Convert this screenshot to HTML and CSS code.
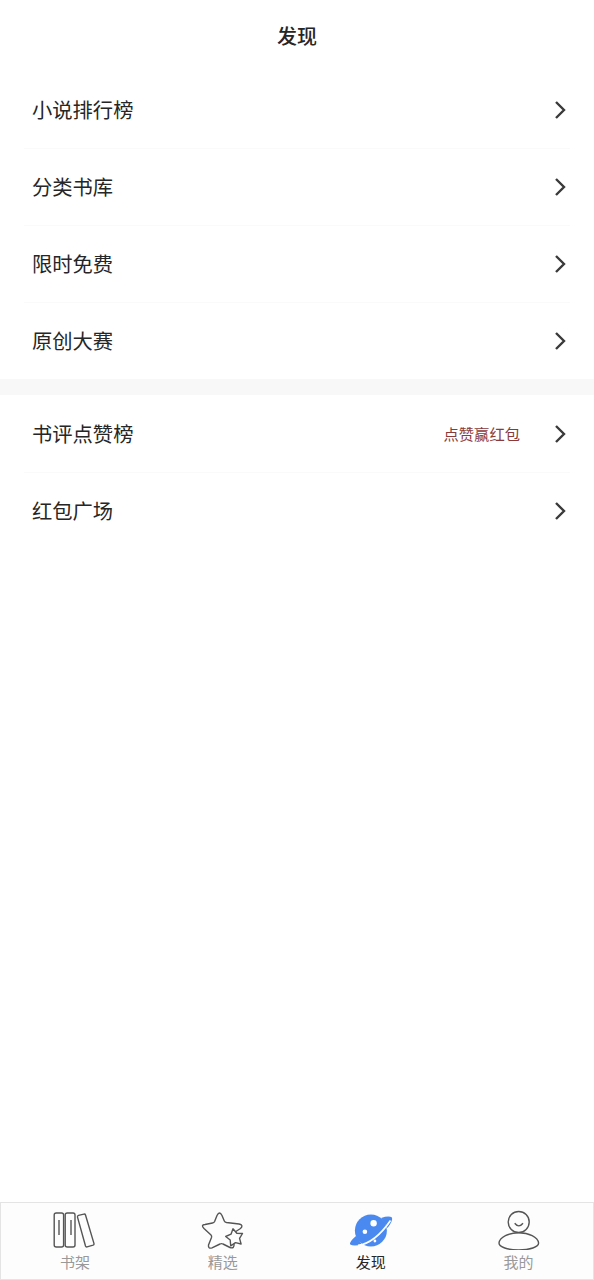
FILE: index.html
```html
<!DOCTYPE html>
<html lang="zh-CN">
<head>
  <meta charset="UTF-8">
  <meta name="viewport" content="width=device-width, initial-scale=1.0">
  <title>发现</title>
  <link rel="stylesheet" href="styles.css">
</head>
<body>
  <div class="page">
    <h1 class="title">发现</h1>

    <div class="group">
      <div class="row"><span class="row-name">小说排行榜</span><svg class="arrow" viewBox="0 0 12 20"><path d="M2 2l8 8-8 8"/></svg></div>
      <div class="row"><span class="row-name">分类书库</span><svg class="arrow" viewBox="0 0 12 20"><path d="M2 2l8 8-8 8"/></svg></div>
      <div class="row"><span class="row-name">限时免费</span><svg class="arrow" viewBox="0 0 12 20"><path d="M2 2l8 8-8 8"/></svg></div>
      <div class="row"><span class="row-name">原创大赛</span><svg class="arrow" viewBox="0 0 12 20"><path d="M2 2l8 8-8 8"/></svg></div>
    </div>

    <div class="divider"></div>

    <div class="group group-second">
      <div class="row"><span class="row-name">书评点赞榜</span><span class="row-tip">点赞赢红包</span><svg class="arrow" viewBox="0 0 12 20"><path d="M2 2l8 8-8 8"/></svg></div>
      <div class="row"><span class="row-name">红包广场</span><svg class="arrow" viewBox="0 0 12 20"><path d="M2 2l8 8-8 8"/></svg></div>
    </div>
  </div>

  <div class="tabbar">
    <div class="tab">
      <svg class="tab-icon" viewBox="0 0 48 40">
        <rect x="3.200" y="3" width="9.400" height="34" rx="2"/>
        <rect x="14.200" y="3" width="9.800" height="34" rx="2"/>
        <path d="M27.500 5.400l5.400-1.300q1.200-.3 1.600 .9l8.500 28.600q.3 1.200-.9 1.600l-6 1.700q-1.200 .3-1.600-.9l-8-28.900q-.3-1.300 1-1.700z"/>
        <path d="M8 10v15M20 10v15"/>
      </svg>
      <span>书架</span>
    </div>
    <div class="tab">
      <svg class="tab-icon" viewBox="0 0 48 40">
        <path d="M18 5.500Q20.500 .5 23 5.500L25.300 11Q25.800 12.200 27.500 12.500L40 14Q45 15 41.500 18.500L34.500 23Q33 25 33.500 27L35 34Q35.500 39 31 37.500L24 34Q22.500 33.200 21 34L13 37.800Q9 39 9.500 35L12.500 27.500Q13 26 12 25L5 18.500Q1.500 15 6 14.500L13.500 13Q15 12.800 15.600 11.500Z"/>
        <path class="small-star" d="M34 18.800L37.800 23.200 43.500 23.500 40.550 28.400 42.100 34 36.500 32.600 31.700 35.800 31.200 30 26.700 26.500 32 24.200Z"/>
      </svg>
      <span>精选</span>
    </div>
    <div class="tab tab-on">
      <svg class="tab-icon" viewBox="0 0 48 40">
        <circle class="planet" cx="23.900" cy="20.500" r="16"/>
        <path class="planet" d="M34 8Q42 5.500 45 7.500 46 11 40.500 18ZM9 26Q1.500 32.500 3.200 34.500 6.500 36.500 15 34.500Z"/>
        <path class="ring-gap" d="M11 35.500Q28 33 43.500 10.500"/>
        <circle class="dot" cx="26.600" cy="13.300" r="3.200"/>
        <circle class="dot" cx="17.900" cy="21.700" r="2.300"/>
        <circle class="dot" cx="27.900" cy="31" r="1.400"/>
      </svg>
      <span>发现</span>
    </div>
    <div class="tab">
      <svg class="tab-icon" viewBox="0 0 48 40">
        <circle cx="23.700" cy="12" r="10.500"/>
        <path d="M19.700 13.300Q23.800 18.500 28 13.300"/>
        <path d="M4 33C4.800 27 13.800 22.800 23.800 22.800C33.800 22.800 42.800 27 43.600 33C43.600 37 34.800 40 23.800 40C12.800 40 4 37 4 33Z"/>
      </svg>
      <span>我的</span>
    </div>
  </div>
</body>
</html>
```
FILE: styles.css
```css
body {
  margin: 0;
  font-family: "Noto Sans CJK SC", "Noto Sans", sans-serif;
  background: #fff;
  color: #262626;
}

.page {
  height: 1202px;
}

.title {
  margin: 0;
  height: 72px;
  line-height: 72px;
  text-align: center;
  font-size: 20px;
  font-weight: 500;
}

.group {
  padding: 0 24px;
}

.group-second {
  padding-top: 1px;
}

.row {
  display: flex;
  align-items: center;
  height: 76px;
  padding: 0 4px 0 8px;
  border-bottom: 1px solid #fafafa;
}

.row:last-child {
  border-bottom: none;
}

.row-name {
  flex: 1;
  margin-top: -2px;
  font-size: 20.300px;
  line-height: 76px;
}

.row-tip {
  margin-top: -2px;
  margin-right: 34px;
  font-size: 15.300px;
  color: #8b3a3a;
}

.arrow {
  width: 12px;
  height: 20px;
  margin-top: -1px;
  fill: none;
  stroke: #3a3a3a;
  stroke-width: 2.400;
}

.divider {
  height: 16px;
  background: #f8f8f8;
}

.tabbar {
  display: flex;
  height: 76px;
  padding-right: 0.500px;
  border: 1px solid #e4e4e4;
  background: #fdfdfd;
}

.tab {
  flex: 1;
  display: flex;
  flex-direction: column;
  align-items: center;
  font-size: 15px;
  line-height: 20px;
  color: #999;
}

.tab-icon {
  width: 48px;
  height: 40px;
  margin-top: 7px;
  margin-bottom: 2px;
  fill: none;
  stroke: #555;
  stroke-width: 1.400;
  stroke-linejoin: round;
}

.tab-on {
  color: #262626;
}

.small-star {
  fill: #fdfdfd;
}

.planet {
  fill: #4a8af0;
  stroke: none;
}

.ring-gap {
  stroke: #fdfdfd;
  stroke-width: 1.800;
}

.dot {
  fill: #fff;
  stroke: none;
}
```
